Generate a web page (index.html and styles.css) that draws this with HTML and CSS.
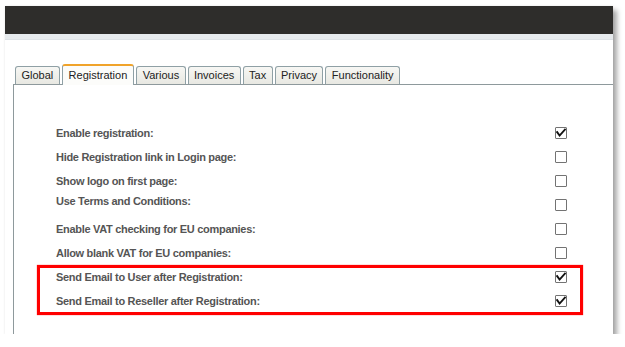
FILE: index.html
```html
<!DOCTYPE html>
<html lang="en">
<head>
  <meta charset="UTF-8">
  <meta name="viewport" content="width=device-width, initial-scale=1.0">
  <title>Registration settings</title>
  <link rel="stylesheet" href="styles.css">
</head>
<body>
  <div class="card">
    <div class="topbar"></div>
    <div class="subbar"></div>
    <div class="content">
      <div class="tabs">
        <div class="tab">Global</div>
        <div class="tab active">Registration</div>
        <div class="tab">Various</div>
        <div class="tab">Invoices</div>
        <div class="tab">Tax</div>
        <div class="tab">Privacy</div>
        <div class="tab">Functionality</div>
      </div>
      <div class="panel">
        <div class="row">
          <span class="label">Enable registration:</span>
          <span class="box checked"><svg viewBox="0 0 10 10"><path d="M0.6 3.4 L3.6 7.6 L9.6 0.8"/></svg></span>
        </div>
        <div class="row">
          <span class="label">Hide Registration link in Login page:</span>
          <span class="box"></span>
        </div>
        <div class="row">
          <span class="label">Show logo on first page:</span>
          <span class="box"></span>
        </div>
        <div class="row">
          <span class="label top">Use Terms and Conditions:</span>
          <span class="box"></span>
        </div>
        <div class="row">
          <span class="label">Enable VAT checking for EU companies:</span>
          <span class="box"></span>
        </div>
        <div class="row">
          <span class="label">Allow blank VAT for EU companies:</span>
          <span class="box"></span>
        </div>
        <div class="highlight">
          <div class="row">
            <span class="label">Send Email to User after Registration:</span>
            <span class="box checked"><svg viewBox="0 0 10 10"><path d="M0.6 3.4 L3.6 7.6 L9.6 0.8"/></svg></span>
          </div>
          <div class="row">
            <span class="label">Send Email to Reseller after Registration:</span>
            <span class="box checked"><svg viewBox="0 0 10 10"><path d="M0.6 3.4 L3.6 7.6 L9.6 0.8"/></svg></span>
          </div>
        </div>
      </div>
    </div>
  </div>
</body>
</html>
```

FILE: styles.css
```css
body {
  margin: 0;
  padding: 6px 0 0 5px;
  background: #fff;
  font-family: "Liberation Sans", Arial, sans-serif;
}
.card {
  width: 608px;
  height: 328px;
  overflow: hidden;
  background: #fff;
  box-shadow: 4px 4px 5px rgba(0, 0, 0, 0.35), 0 0 2px rgba(0, 0, 0, 0.08);
}
.topbar {
  height: 28px;
  background: #2e2d2b;
}
.subbar {
  height: 5px;
  background: #e6eaed;
  border-bottom: 1px solid #dde2e6;
}
.content {
  padding: 24px 0 0 8px;
}
.tabs {
  display: flex;
  align-items: flex-end;
  gap: 2px;
  padding-left: 2px;
  position: relative;
  z-index: 1;
}
.tab {
  font-size: 11px;
  color: #222;
  line-height: 17px;
  padding: 0 5.4px;
  border: 1px solid #8fa0a5;
  border-bottom: none;
  border-radius: 3px 3px 0 0;
  background: linear-gradient(#f7f7f4, #e8e8e2);
}
.tab.active {
  border-top: 2px solid #f0a32a;
  padding: 1px 6px 1px;
  margin-bottom: -1px;
  background: #fcfcfa;
}
.panel {
  border: 1px solid #8e999c;
  margin-right: -4px;
  height: 300px;
  padding: 36px 0 0 42px;
}
.row {
  width: 511px;
  height: 24px;
  display: flex;
  align-items: center;
  justify-content: space-between;
}
.label {
  font-size: 11px;
  font-weight: bold;
  letter-spacing: -0.3px;
  color: #555;
  line-height: 14px;
}
.label.top {
  align-self: flex-start;
  margin-top: 1px;
}
.box {
  width: 10px;
  height: 10px;
  border: 1px solid #737373;
  border-radius: 1px;
  background: #fff;
  display: flex;
}
.box svg {
  width: 10px;
  height: 10px;
  fill: none;
  stroke: #111;
  stroke-width: 1.9;
}
.highlight {
  position: relative;
  width: 511px;
}
.highlight::after {
  content: "";
  position: absolute;
  top: 0;
  bottom: -2px;
  left: -19px;
  right: -16px;
  border: 3px solid #ff0000;
  box-shadow: 0 0 1px #ff4040;
}
```
